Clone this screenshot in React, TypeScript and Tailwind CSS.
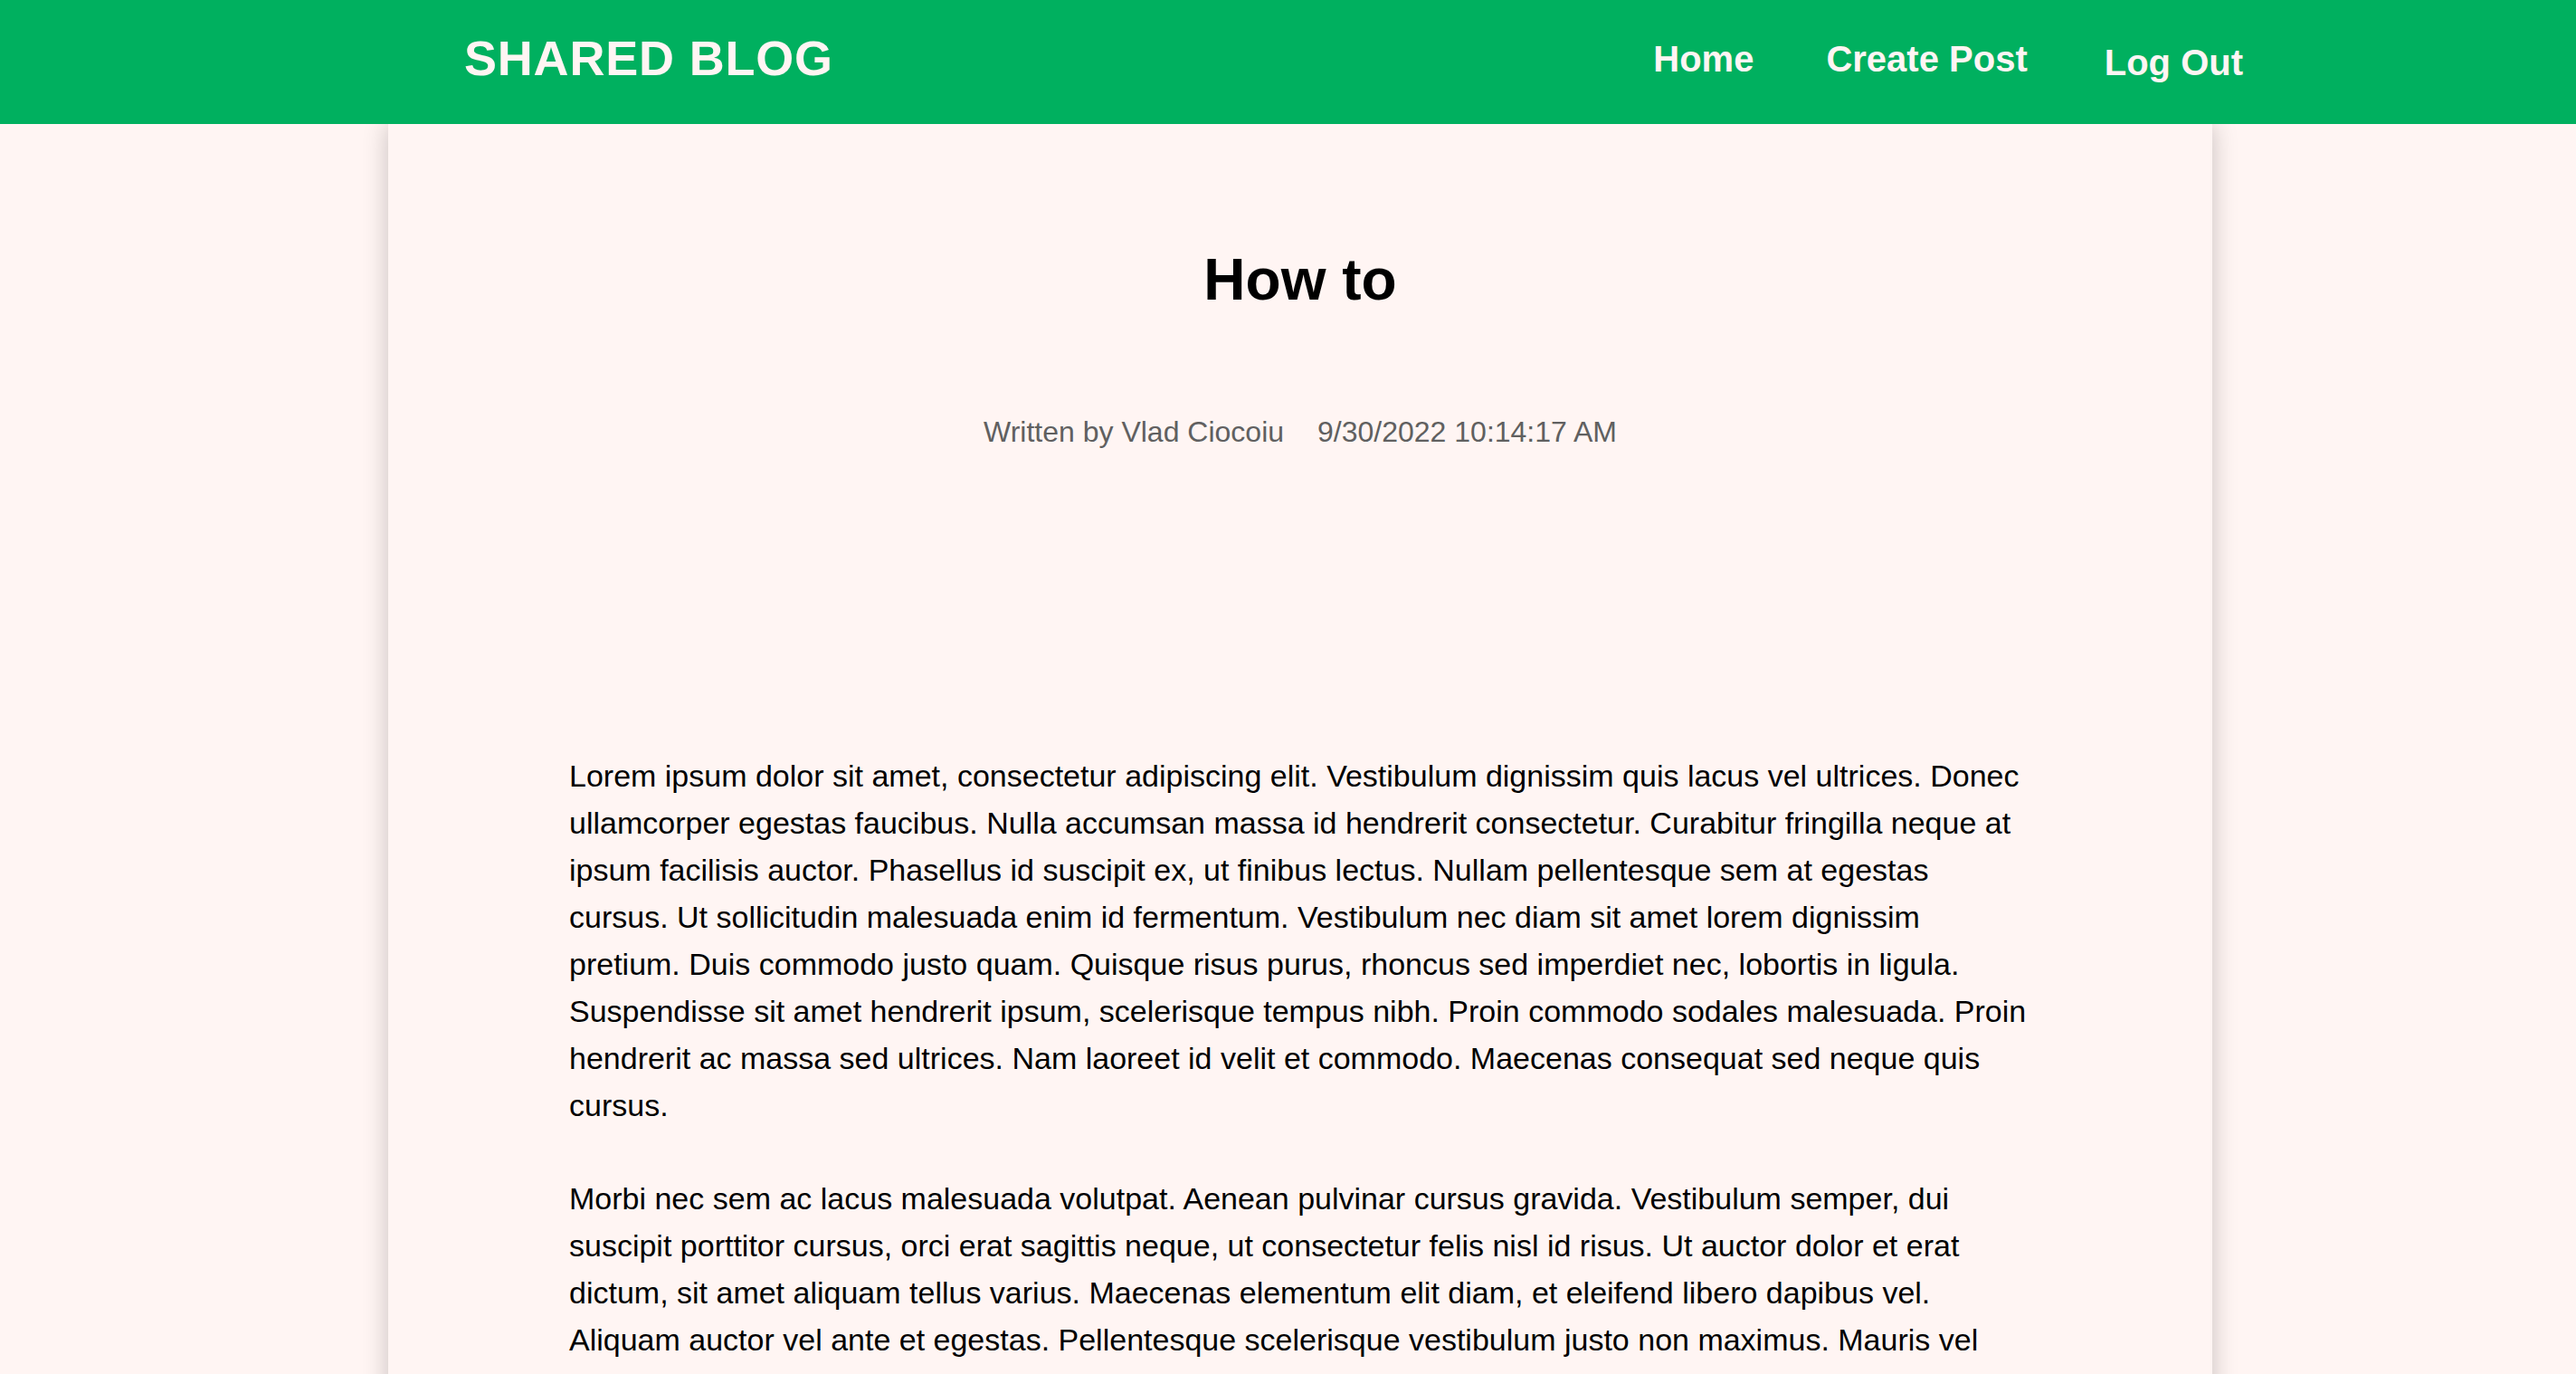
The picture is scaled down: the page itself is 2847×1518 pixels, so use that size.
import React from "react";

const paragraphs = [
  "Lorem ipsum dolor sit amet, consectetur adipiscing elit. Vestibulum dignissim quis lacus vel ultrices. Donec ullamcorper egestas faucibus. Nulla accumsan massa id hendrerit consectetur. Curabitur fringilla neque at ipsum facilisis auctor. Phasellus id suscipit ex, ut finibus lectus. Nullam pellentesque sem at egestas cursus. Ut sollicitudin malesuada enim id fermentum. Vestibulum nec diam sit amet lorem dignissim pretium. Duis commodo justo quam. Quisque risus purus, rhoncus sed imperdiet nec, lobortis in ligula. Suspendisse sit amet hendrerit ipsum, scelerisque tempus nibh. Proin commodo sodales malesuada. Proin hendrerit ac massa sed ultrices. Nam laoreet id velit et commodo. Maecenas consequat sed neque quis cursus.",
  "Morbi nec sem ac lacus malesuada volutpat. Aenean pulvinar cursus gravida. Vestibulum semper, dui suscipit porttitor cursus, orci erat sagittis neque, ut consectetur felis nisl id risus. Ut auctor dolor et erat dictum, sit amet aliquam tellus varius. Maecenas elementum elit diam, et eleifend libero dapibus vel. Aliquam auctor vel ante et egestas. Pellentesque scelerisque vestibulum justo non maximus. Mauris vel lacus quis sapien fermentum tincidunt. Integer vitae ipsum at augue pharetra posuere. Sed in massa eget nibh pretium aliquet non ut lectus.",
  "Donec vitae magna sed risus feugiat tristique. Cras sed consequat purus, vitae tempor nisl. Aenean eu sagittis mi. Nunc efficitur ligula id massa finibus, nec ultricies libero dignissim. Fusce at nisl at orci luctus pretium.",
];

export default function App() {
  return (
    <div className="min-h-screen bg-[#fff5f3] font-['Liberation_Sans',Arial,sans-serif]">
      {/* Navbar */}
      <header className="relative z-10 flex h-[137px] items-center justify-between bg-[#00b05f] pl-[513px] pr-[368px] text-[#fff5f3]">
        <a className="-mt-[10px] text-[54px] font-bold leading-none tracking-[0.8px]">
          SHARED BLOG
        </a>
        <nav className="flex items-center">
          <a className="-mt-[8px] text-[40px] font-bold leading-none">Home</a>
          <a className="-mt-[8px] ml-[80px] text-[40px] font-bold leading-none">
            Create Post
          </a>
          <button className="ml-[85px] text-[40px] font-bold leading-none">
            Log Out
          </button>
        </nav>
      </header>

      {/* Post */}
      <div className="flex justify-center pl-[27px]">
        <article className="w-[2016px] bg-[#fff5f3] px-[200px] pb-[120px] pt-[140px] shadow-[0_0_26px_rgba(0,0,0,0.22)]">
          <h1 className="text-center text-[64px] font-bold leading-none text-black">
            How to
          </h1>
          <div className="mt-[120px] flex justify-center gap-[37px] text-[32px] leading-none text-[#606060]">
            <span>Written by Vlad Ciocoiu</span>
            <span>9/30/2022 10:14:17 AM</span>
          </div>
          <div className="mt-[338px]">
            {paragraphs.map((p, i) => (
              <p key={i} className="mb-[51px] text-[34px] leading-[52px] text-black">
                {p}
              </p>
            ))}
          </div>
        </article>
      </div>
    </div>
  );
}
